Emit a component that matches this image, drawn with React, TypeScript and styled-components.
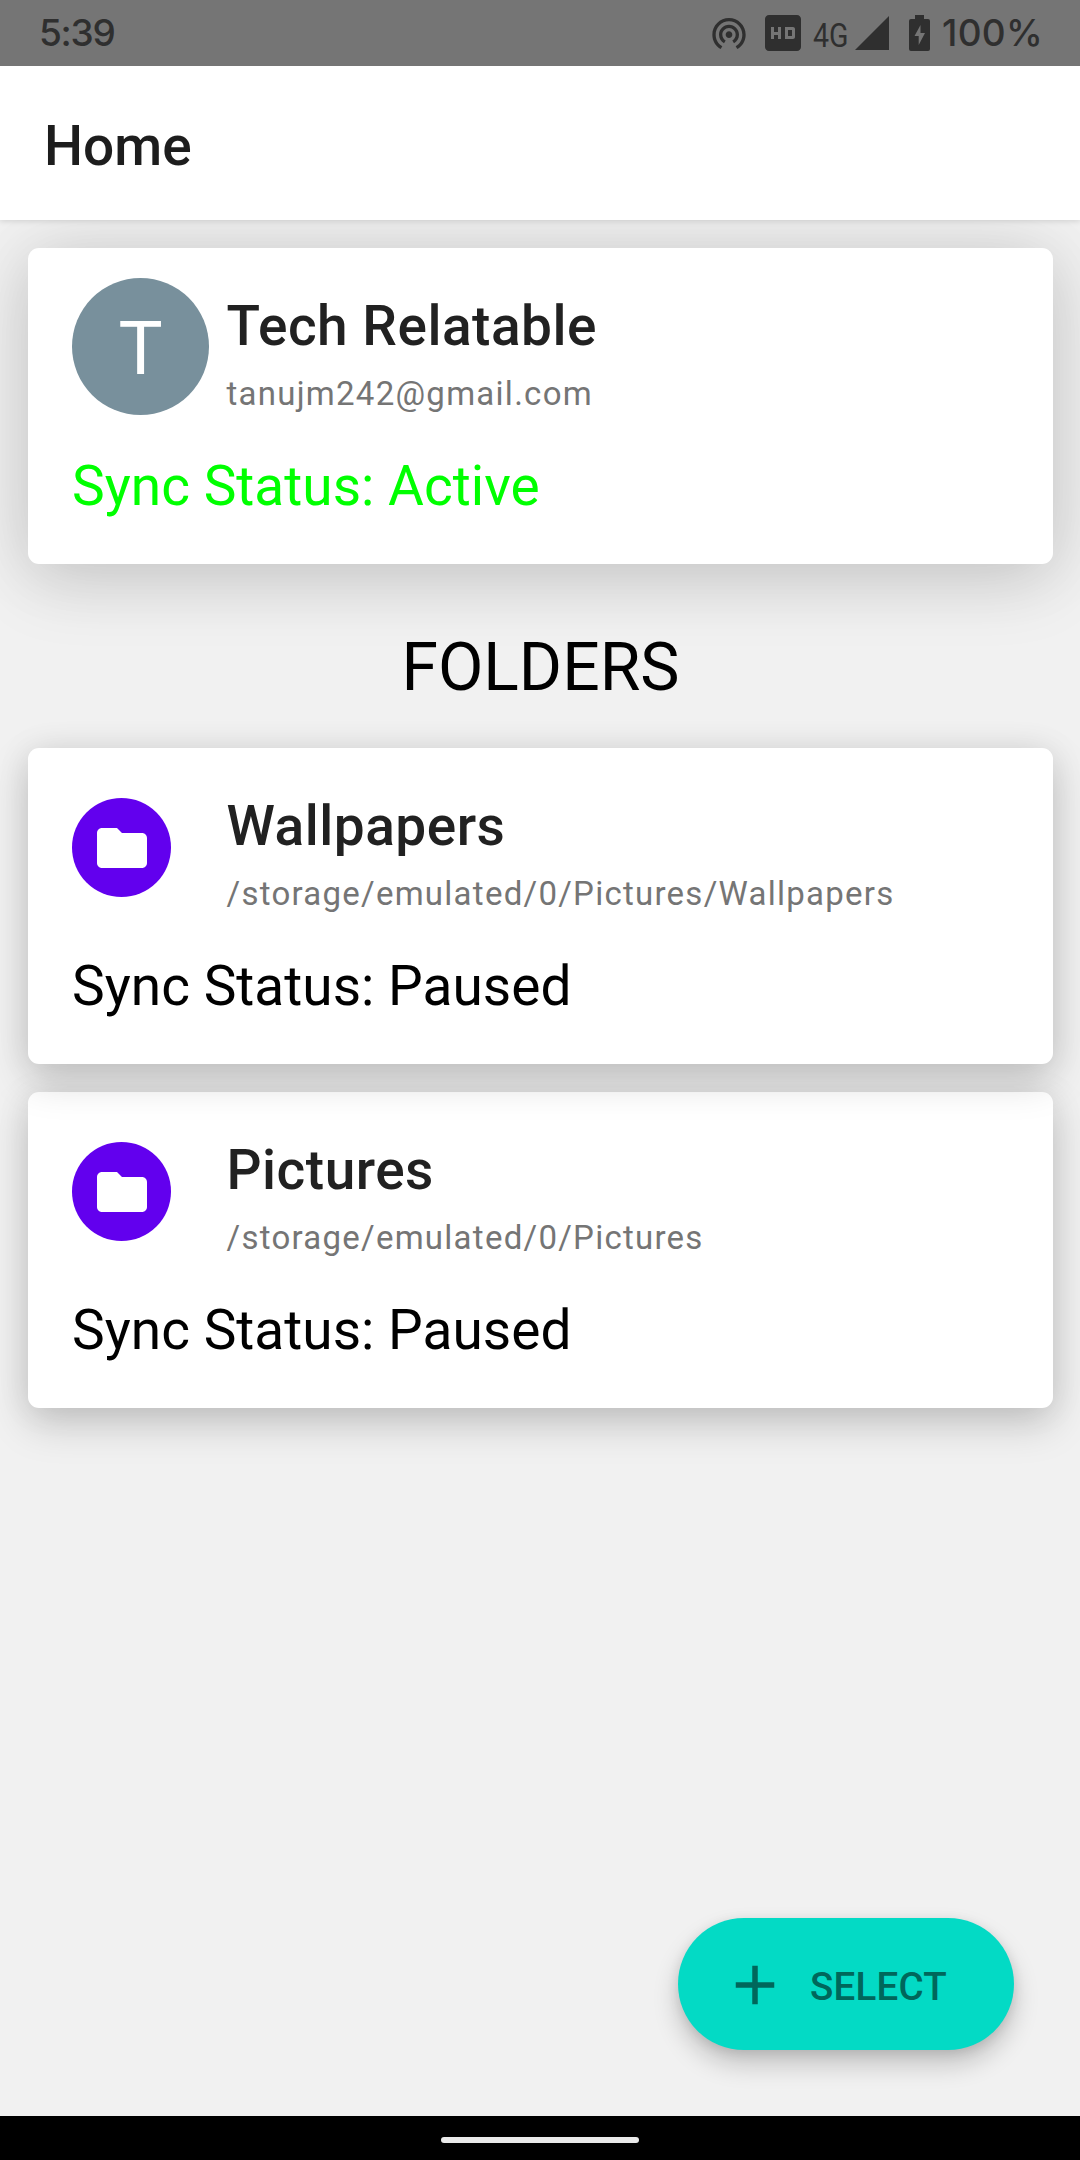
import React from "react";
import styled, { createGlobalStyle } from "styled-components";

const GlobalStyle = createGlobalStyle`
  * { box-sizing: border-box; }
  body { margin: 0; background: #f1f1f1; font-family: Roboto, "Liberation Sans", sans-serif; }
`;

const Screen = styled.div`
  width: 1080px;
  height: 2160px;
  display: flex;
  flex-direction: column;
  background: #f1f1f1;
  overflow: hidden;
`;

const StatusBar = styled.header`
  height: 66px;
  flex: none;
  display: flex;
  align-items: center;
  padding: 0 40px 0 39px;
  background: #757575;
  color: #2f2f2f;
  z-index: 2;
`;

const Clock = styled.span`
  flex: 1;
  font: 500 37px/66px Inter, sans-serif;
  letter-spacing: -1.3px;
`;

const Battery = styled.span`
  width: 98px;
  margin-left: 12px;
  font: 500 37px/66px Inter, sans-serif;
  letter-spacing: 0.3px;
  white-space: nowrap;
`;

const Network = styled.span`
  margin-left: 12px;
  font: 400 34px/66px Roboto, sans-serif;
  transform: scaleX(0.84);
  transform-origin: left;
  width: 36px;
  padding-top: 3px;
`;

const StatusIcon = styled.svg<{ $gap?: number }>`
  flex: none;
  display: block;
  margin-left: ${(p) => p.$gap ?? 0}px;
`;

const AppBar = styled.div`
  height: 154px;
  flex: none;
  display: flex;
  align-items: center;
  padding: 5px 44px 0;
  background: #fff;
  box-shadow: 0 1px 6px rgba(0, 0, 0, 0.14);
  z-index: 1;
`;

const Heading = styled.h1`
  margin: 0;
  font-size: 55px;
  font-weight: 500;
  line-height: 64px;
  color: #1d1d1d;
`;

const Content = styled.main`
  flex: 1;
  display: flex;
  flex-direction: column;
  padding: 28px 27px 0 28px;
`;

const Card = styled.section<{ $raised?: boolean }>`
  position: relative;
  height: 316px;
  flex: none;
  display: flex;
  flex-direction: column;
  padding: 30px 44px 0;
  border-radius: 11px;
  background: #fff;
  box-shadow: ${(p) =>
    p.$raised
      ? "0 20px 70px rgba(0, 0, 0, 0.12), 0 0 70px rgba(0, 0, 0, 0.1)"
      : "0 16px 42px rgba(0, 0, 0, 0.18), 0 1px 34px rgba(0, 0, 0, 0.08)"};
`;

const CardHeader = styled.div`
  height: 137px;
  display: flex;
`;

const Leading = styled.div`
  width: 154.5px;
  flex: none;
  display: flex;
  align-items: center;
`;

const Avatar = styled.div`
  width: 137px;
  height: 137px;
  display: flex;
  align-items: center;
  justify-content: center;
  padding-top: 4px;
  border-radius: 50%;
  background: #78909c;
  color: #fff;
  font-size: 74px;
`;

const FolderBadge = styled.div`
  width: 99px;
  height: 99px;
  display: flex;
  align-items: center;
  justify-content: center;
  margin-top: 2px;
  padding-top: 1px;
  border-radius: 50%;
  background: #6200ee;
`;

const Labels = styled.div`
  display: flex;
  flex-direction: column;
  padding-top: 16px;
`;

const Title = styled.h2`
  margin: 0;
  font-size: 55px;
  font-weight: 500;
  line-height: 64px;
  letter-spacing: 0.5px;
  color: #212121;
`;

const Subtitle = styled.p`
  margin: 16px 0 0;
  font-size: 33px;
  line-height: 40px;
  letter-spacing: 1.26px;
  color: #757575;
`;

const Status = styled.p<{ $color: string }>`
  margin: 39px 0 0;
  font-size: 55px;
  line-height: 64px;
  letter-spacing: 0.03px;
  color: ${(p) => p.$color};
`;

const SectionTitle = styled.h2`
  position: relative;
  z-index: 3;
  margin: 65px 0 41px;
  font-size: 66px;
  font-weight: 400;
  line-height: 78px;
  text-align: center;
  color: #000;
`;

const FolderList = styled.div`
  display: flex;
  flex-direction: column;
  gap: 28px;
`;

const Fab = styled.button`
  align-self: flex-end;
  margin: auto 39px 66px 0;
  width: 336px;
  height: 132px;
  display: flex;
  align-items: center;
  gap: 22px;
  padding: 2px 0 0 44px;
  border: 0;
  border-radius: 66px;
  background: #03dac5;
  color: #00675b;
  font: 500 38.5px/46px Roboto, sans-serif;
  letter-spacing: 0.2px;
  box-shadow: 0 14px 26px rgba(0, 0, 0, 0.2), 0 3px 12px rgba(0, 0, 0, 0.1);
`;

const FabLabel = styled.span`
  padding-top: 4px;
`;

const NavBar = styled.footer`
  height: 44px;
  flex: none;
  display: flex;
  align-items: center;
  justify-content: center;
  padding-top: 4px;
  background: #000;
`;

const NavHandle = styled.div`
  width: 198px;
  height: 6px;
  border-radius: 3px;
  background: #eaeaea;
`;

const FolderIcon = () => (
  <svg width="60" height="60" viewBox="0 0 24 24" fill="#fff">
    <path d="M10 4H4c-1.1 0-1.99.9-1.99 2L2 18c0 1.1.9 2 2 2h16c1.1 0 2-.9 2-2V8c0-1.1-.9-2-2-2h-8l-2-2z" />
  </svg>
);

const folders = [
  { name: "Wallpapers", path: "/storage/emulated/0/Pictures/Wallpapers", status: "Paused" },
  { name: "Pictures", path: "/storage/emulated/0/Pictures", status: "Paused" },
];

export default function App() {
  return (
    <Screen>
      <GlobalStyle />
      <StatusBar>
        <Clock>5:39</Clock>
        <StatusIcon width="40" height="40" viewBox="0 0 24 24" fill="currentColor">
          <path d="M12 11c-1.1 0-2 .9-2 2s.9 2 2 2 2-.9 2-2-.9-2-2-2zm6 2c0-3.31-2.69-6-6-6s-6 2.69-6 6c0 2.22 1.21 4.15 3 5.19l1-1.74c-1.19-.7-2-1.97-2-3.45 0-2.21 1.79-4 4-4s4 1.79 4 4c0 1.48-.81 2.75-2 3.45l1 1.74c1.79-1.04 3-2.97 3-5.19zM12 3C6.48 3 2 7.48 2 13c0 3.7 2.01 6.92 4.99 8.65l1-1.73C5.61 18.53 4 15.96 4 13c0-4.42 3.58-8 8-8s8 3.58 8 8c0 2.96-1.61 5.53-4 6.92l1 1.73c2.99-1.73 5-4.95 5-8.65 0-5.52-4.48-10-10-10z" />
        </StatusIcon>
        <StatusIcon $gap={16} width="36" height="36" viewBox="3 3 18 18" fill="currentColor">
          <path d="M19 3H5c-1.11 0-2 .9-2 2v14c0 1.1.89 2 2 2h14c1.1 0 2-.9 2-2V5c0-1.1-.9-2-2-2zm-8 12H9.5v-2h-2v2H6V9h1.5v2.5h2V9H11v6zm2-6h4c.55 0 1 .45 1 1v4c0 .55-.45 1-1 1h-4V9zm1.5 4.5h2v-3h-2v3z" />
        </StatusIcon>
        <Network>4G</Network>
        <StatusIcon $gap={6} width="34" height="34" viewBox="0 0 34 34" fill="currentColor">
          <path d="M34 0V34H0z" />
        </StatusIcon>
        <StatusIcon $gap={20} width="21" height="36" viewBox="0 0 21 36" fill="currentColor">
          <path fillRule="evenodd" d="M6 0h9v4h4q2 0 2 2v28q0 2-2 2H2q-2 0-2-2V6q0-2 2-2h4zM11.5 10L5.5 21h4.200v9L16 18h-4.500z" />
        </StatusIcon>
        <Battery>100%</Battery>
      </StatusBar>
      <AppBar>
        <Heading>Home</Heading>
      </AppBar>
      <Content>
        <Card $raised>
          <CardHeader>
            <Leading>
              <Avatar>T</Avatar>
            </Leading>
            <Labels>
              <Title>Tech Relatable</Title>
              <Subtitle>tanujm242@gmail.com</Subtitle>
            </Labels>
          </CardHeader>
          <Status $color="#00ff00">Sync Status: Active</Status>
        </Card>
        <SectionTitle>FOLDERS</SectionTitle>
        <FolderList>
          {folders.map((f, i) => (
            <Card key={f.path} style={{ zIndex: folders.length - i }}>
              <CardHeader>
                <Leading>
                  <FolderBadge>
                    <FolderIcon />
                  </FolderBadge>
                </Leading>
                <Labels>
                  <Title>{f.name}</Title>
                  <Subtitle>{f.path}</Subtitle>
                </Labels>
              </CardHeader>
              <Status $color="#000">Sync Status: {f.status}</Status>
            </Card>
          ))}
        </FolderList>
        <Fab>
          <svg width="66" height="66" viewBox="0 0 24 24" fill="currentColor">
            <path d="M19 13h-6v6h-2v-6H5v-2h6V5h2v6h6z" />
          </svg>
          <FabLabel>SELECT</FabLabel>
        </Fab>
      </Content>
      <NavBar>
        <NavHandle />
      </NavBar>
    </Screen>
  );
}
